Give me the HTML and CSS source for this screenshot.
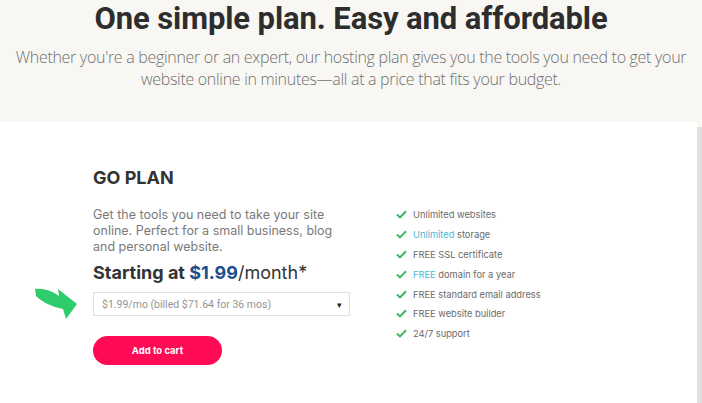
FILE: index.html
```html
<!DOCTYPE html>
<html lang="en">
<head>
<meta charset="utf-8">
<title>One simple plan</title>
<link rel="stylesheet" href="styles.css">
</head>
<body>
<header class="hero">
  <h1 class="hero-title">One simple plan. Easy and affordable</h1>
  <p class="hero-sub">Whether you're a beginner or an expert, our hosting plan gives you the tools you need to get your website online in minutes—all at a price that fits your budget.</p>
</header>
<section class="plan-wrap">
  <div class="plan-card">
    <div class="plan-main">
      <h2 class="plan-name">GO PLAN</h2>
      <p class="plan-desc">Get the tools you need to take your site online. Perfect for a small business, blog and personal website.</p>
      <p class="plan-price">Starting at <span class="price-amount">$1.99</span><span class="price-unit">/month*</span></p>
      <div class="select-row">
        <svg class="pointer" width="44" height="34" viewBox="0 0 44 34" aria-hidden="true">
          <path d="M1 3 C10 2 18 5 25 10 L24 3 L43 18 L32 33 L29 23 C18 21 8 16 2 10 Z" fill="#2ecc6a"/>
        </svg>
        <div class="select-box">
          <span class="select-text">$1.99/mo (billed $71.64 for 36 mos)</span>
          <span class="select-caret">▾</span>
        </div>
      </div>
      <button class="cart-btn">Add to cart</button>
    </div>
    <ul class="features">
      <li class="feature"><svg class="check" width="11" height="9" viewBox="0 0 11 9"><path d="M1 4.6 L4 7.4 L10 1.2" fill="none" stroke="#3cb95c" stroke-width="2"/></svg><span>Unlimited websites</span></li>
      <li class="feature"><svg class="check" width="11" height="9" viewBox="0 0 11 9"><path d="M1 4.6 L4 7.4 L10 1.2" fill="none" stroke="#3cb95c" stroke-width="2"/></svg><span><span class="hl">Unlimited</span> storage</span></li>
      <li class="feature"><svg class="check" width="11" height="9" viewBox="0 0 11 9"><path d="M1 4.6 L4 7.4 L10 1.2" fill="none" stroke="#3cb95c" stroke-width="2"/></svg><span>FREE SSL certificate</span></li>
      <li class="feature"><svg class="check" width="11" height="9" viewBox="0 0 11 9"><path d="M1 4.6 L4 7.4 L10 1.2" fill="none" stroke="#3cb95c" stroke-width="2"/></svg><span><span class="hl">FREE</span> domain for a year</span></li>
      <li class="feature"><svg class="check" width="11" height="9" viewBox="0 0 11 9"><path d="M1 4.6 L4 7.4 L10 1.2" fill="none" stroke="#3cb95c" stroke-width="2"/></svg><span>FREE standard email address</span></li>
      <li class="feature"><svg class="check" width="11" height="9" viewBox="0 0 11 9"><path d="M1 4.6 L4 7.4 L10 1.2" fill="none" stroke="#3cb95c" stroke-width="2"/></svg><span>FREE website builder</span></li>
      <li class="feature"><svg class="check" width="11" height="9" viewBox="0 0 11 9"><path d="M1 4.6 L4 7.4 L10 1.2" fill="none" stroke="#3cb95c" stroke-width="2"/></svg><span>24/7 support</span></li>
    </ul>
  </div>
  <div class="edge"></div>
</section>
</body>
</html>
```
FILE: styles.css
```css
* { box-sizing: border-box; }
html, body { margin: 0; padding: 0; }
body {
  background: #f8f7f4;
  font-family: Inter, "Liberation Sans", sans-serif;
  color: #333;
  height: 403px;
  overflow: hidden;
}
.hero {
  height: 122px;
  text-align: center;
}
.hero-title {
  margin: 0;
  font-family: Roboto, "Liberation Sans", sans-serif;
  font-weight: 700;
  font-size: 31px;
  line-height: 37px;
  color: #2d2d2d;
  letter-spacing: -0.1px;
}
.hero-sub {
  margin: 9px auto 0;
  width: 690px;
  font-family: "Open Sans", sans-serif;
  font-weight: 300;
  font-size: 16px;
  letter-spacing: -0.3px;
  line-height: 22px;
  color: #6f6f6f;
}
.plan-wrap {
  display: flex;
  height: 281px;
}
.plan-card {
  flex: 1;
  background: #fff;
  display: flex;
  padding: 44px 0 0 93px;
  gap: 46px;
}
.edge {
  width: 5px;
  margin-top: 5px;
  background: #e3e1dd;
}
.plan-main {
  width: 257px;
  display: flex;
  flex-direction: column;
  align-items: flex-start;
}
.plan-name {
  margin: 0;
  font-size: 18px;
  line-height: 24px;
  font-weight: 700;
  color: #333;
}
.plan-desc {
  margin: 17px 0 0;
  font-size: 12.5px;
  line-height: 16px;
  color: #7a7a7a;
}
.plan-price {
  margin: 6px 0 0;
  font-size: 18px;
  line-height: 24px;
  font-weight: 700;
  color: #333;
}
.price-amount { color: #1c4f8c; }
.price-unit { font-weight: 400; }
.select-row {
  position: relative;
  margin-top: 7px;
  width: 257px;
}
.pointer {
  position: absolute;
  left: -59px;
  top: -6px;
}
.select-box {
  height: 24px;
  border: 1px solid #e1e1e1;
  display: flex;
  align-items: center;
  justify-content: space-between;
  padding: 0 7px 0 8px;
  background: #fff;
}
.select-text {
  font-family: Roboto, "Liberation Sans", sans-serif;
  font-size: 10.5px;
  color: #959595;
}
.select-caret {
  font-size: 9px;
  color: #222;
}
.cart-btn {
  margin-top: 20px;
  width: 129px;
  height: 29px;
  border: 0;
  border-radius: 15px;
  background: #ff0a54;
  color: #fff;
  font-family: Inter, "Liberation Sans", sans-serif;
  font-weight: 700;
  font-size: 9.5px;
  padding: 0;
}
.features {
  list-style: none;
  margin: 39px 0 0;
  padding: 0;
}
.feature {
  display: flex;
  align-items: center;
  gap: 6px;
  height: 19.8px;
  font-size: 9.3px;
  color: #6a6a6a;
}
.check { flex: none; }
.hl { color: #4bb6d8; }
```
